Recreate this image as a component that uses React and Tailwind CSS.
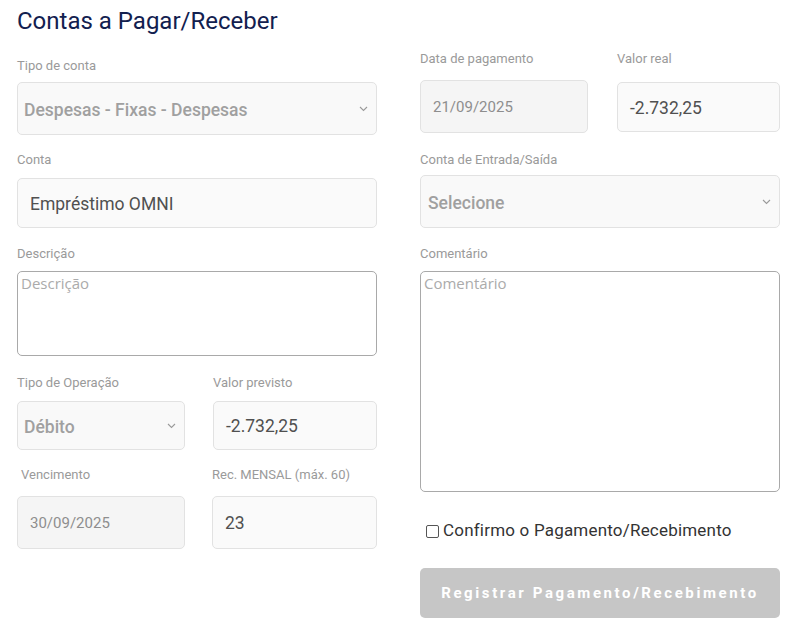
import React from "react";

const Chevron = () => (
  <svg width="9" height="6" viewBox="0 0 9 6" className="shrink-0">
    <polyline points="1,1 4.5,4.5 8,1" fill="none" stroke="#9a9a9a" strokeWidth="1.1" />
  </svg>
);

const Label = ({ children, className = "" }) => (
  <div className={"h-4 text-[13px] leading-4 text-[#9a9a9a] " + className}>{children}</div>
);

const SelectBox = ({ value, className = "" }) => (
  <div
    className={
      "flex items-center justify-between rounded-[5px] border border-[#e2e2e2] bg-[#f9f9f9] pl-[6px] pr-[8px] " +
      className
    }
  >
    <span className="pt-[4px] text-[17.5px] font-medium text-[#a0a0a0]">{value}</span>
    <Chevron />
  </div>
);

const InputBox = ({ value, muted, className = "" }) => (
  <div
    className={
      "flex items-center rounded-[5px] border border-[#e2e2e2] px-3 pt-[2px] " +
      (muted ? "bg-[#f5f5f5] text-[15px] text-[#8e8e8e] " : "bg-[#fafafa] text-[17.5px] text-[#505050] ") +
      className
    }
  >
    {value}
  </div>
);

const Area = ({ placeholder, className = "" }) => (
  <div
    className={
      "rounded-[5px] border border-[#a9a9a9] bg-white px-[3px] pt-[1px] text-[15px] leading-5 text-[#ababab] " +
      className
    }
    style={{ fontFamily: '"Open Sans", sans-serif' }}
  >
    {placeholder}
  </div>
);

export default function App() {
  return (
    <div
      className="flex h-[633px] w-[787px] gap-[43px] bg-white pl-[17px] text-[#333]"
      style={{ fontFamily: "Roboto, sans-serif" }}
    >
      {/* left column */}
      <div className="flex w-[360px] flex-col">
        <h1 className="h-[42px] text-[24px] leading-[42px] text-[#12204f]">Contas a Pagar/Receber</h1>

        <Label className="mt-[16px]">Tipo de conta</Label>
        <SelectBox value="Despesas - Fixas - Despesas" className="mt-[8px] h-[53px]" />

        <Label className="mt-[17px]">Conta</Label>
        <InputBox value="Empréstimo OMNI" className="mt-[10px] h-[50px]" />

        <Label className="mt-[18px]">Descrição</Label>
        <Area placeholder="Descrição" className="mt-[9px] h-[85px]" />

        <div className="mt-[19px] flex gap-[28px]">
          <div className="flex w-[168px] flex-col">
            <Label>Tipo de Operação</Label>
            <SelectBox value="Débito" className="mt-[10px] h-[49px]" />
            <Label className="mt-[17px] pl-[4px]">Vencimento</Label>
            <InputBox value="30/09/2025" muted className="mt-[13px] h-[53px]" />
          </div>
          <div className="flex w-[164px] flex-col">
            <Label>Valor previsto</Label>
            <InputBox value="-2.732,25" className="mt-[10px] h-[49px]" />
            <Label className="mt-[17px] -ml-[1px]">Rec. MENSAL (máx. 60)</Label>
            <InputBox value="23" className="mt-[13px] -ml-[1px] h-[53px] w-[165px]" />
          </div>
        </div>
      </div>

      {/* right column */}
      <div className="flex w-[360px] flex-col pt-[51px]">
        <div className="flex items-start gap-[29px]">
          <div className="flex w-[168px] flex-col">
            <Label>Data de pagamento</Label>
            <InputBox value="21/09/2025" muted className="mt-[13px] h-[53px]" />
          </div>
          <div className="flex w-[163px] flex-col">
            <Label>Valor real</Label>
            <InputBox value="-2.732,25" className="mt-[15px] h-[50px]" />
          </div>
        </div>

        <Label className="mt-[19px]">Conta de Entrada/Saída</Label>
        <SelectBox value="Selecione" className="mt-[7px] h-[53px] pl-[7px]" />

        <Label className="mt-[18px]">Comentário</Label>
        <Area placeholder="Comentário" className="mt-[9px] h-[221px]" />

        <label className="mt-[29px] flex h-5 items-center pl-[6px] text-[17px] tracking-[0.2px] text-[#333]">
          <span className="mr-[4px] inline-block h-[13px] w-[13px] rounded-[2px] border border-[#555] bg-white" />
          Confirmo o Pagamento/Recebimento
        </label>

        <button className="mt-[27px] h-[50px] w-full rounded-[5px] bg-[#c6c6c6] text-[15px] font-bold tracking-[2.6px] text-white">
          Registrar Pagamento/Recebimento
        </button>
      </div>
    </div>
  );
}
